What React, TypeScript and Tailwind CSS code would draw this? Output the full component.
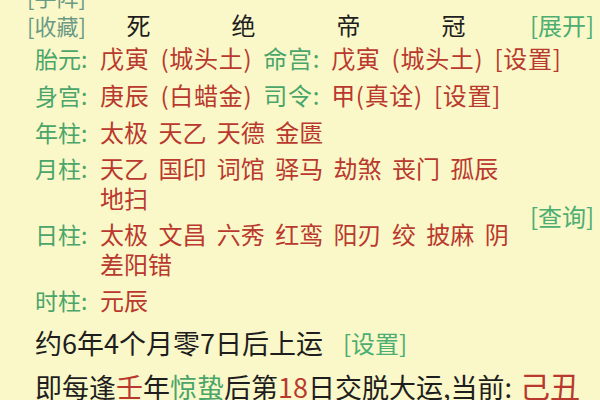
import React from "react";

const G = "text-[#4aa56b]";
const R = "text-[#b9392e]";

function Row({
  label,
  children,
  className = "",
}: {
  label: string;
  children: React.ReactNode;
  className?: string;
}) {
  return (
    <div className={"flex " + className}>
      <div className={"w-[65px] shrink-0 whitespace-nowrap text-[23px] tracking-normal " + G}>{label}:</div>
      <div className="min-w-0 flex-1">{children}</div>
    </div>
  );
}

export default function App() {
  return (
    <div className="h-[400px] w-[600px] overflow-hidden bg-[#faf8c8] font-['Noto_Sans_CJK_SC',sans-serif] text-[24px] leading-[30px] text-[#1e1e1e] [word-spacing:5px]">
      {/* header */}
      <div className="-mt-[18px] pl-[27px]">
        <div className="h-[28px] whitespace-nowrap text-[22px] leading-[28px] text-[#6a9a86]">[手阵]</div>
        <div className="flex h-[30px] items-center">
          <div className="w-[59px] shrink-0 whitespace-nowrap text-[22px] text-[#6a9a86]">[收藏]</div>
          <div className="grid w-[420px] shrink-0 grid-cols-4 text-center">
            <span>死</span>
            <span>绝</span>
            <span>帝</span>
            <span>冠</span>
          </div>
          <div className="ml-[24px] whitespace-nowrap text-[#4cae72]">[展开]</div>
        </div>
      </div>

      {/* body */}
      <div className="mt-[3px] pl-[35px]">
        <Row label="胎元" className="tracking-[0.7px]">
          <span className={R}>戊寅 (城头土)</span>{" "}
          <span className={G}>命宫:</span>{" "}
          <span className={R}>戊寅 (城头土)</span>{" "}
          <span className={R}>[设置]</span>
        </Row>
        <Row label="身宫" className="mt-[7px] tracking-[0.7px]">
          <span className={R}>庚辰 (白蜡金)</span>{" "}
          <span className={G}>司令:</span>{" "}
          <span className={R}>甲(真诠)</span>{" "}
          <span className={R}>[设置]</span>
        </Row>

        <div className="mt-[7px] flex">
          <div className="flex w-[490px] flex-col gap-[6px]">
            <Row label="年柱">
              <span className={R}>太极 天乙 天德 金匮</span>
            </Row>
            <Row label="月柱">
              <span className={R}>天乙 国印 词馆 驿马 劫煞 丧门 孤辰 地扫</span>
            </Row>
            <Row label="日柱">
              <span className={R}>太极 文昌 六秀 红鸾 阳刃 绞 披麻 阴差阳错</span>
            </Row>
            <Row label="时柱">
              <span className={R}>元辰</span>
            </Row>
          </div>
          <div className="self-center whitespace-nowrap pl-[5px] text-[#4cae72]">[查询]</div>
        </div>

        <div className="mt-[13px] flex items-center whitespace-nowrap text-[27px]">
          <span>约6年4个月零7日后上运</span>
          <span className="ml-[20px] text-[24px] text-[#4cae72]">[设置]</span>
        </div>
        <div className="mt-[12px] whitespace-nowrap text-[27px] [word-spacing:2px]">
          即每逢<span className={R}>壬</span>年<span className={G}>惊蛰</span>后第<span className={R}>18</span>日交脱大运,当前:{" "}
          <span className={"text-[30px] " + R}>己丑</span>
        </div>
      </div>
    </div>
  );
}
